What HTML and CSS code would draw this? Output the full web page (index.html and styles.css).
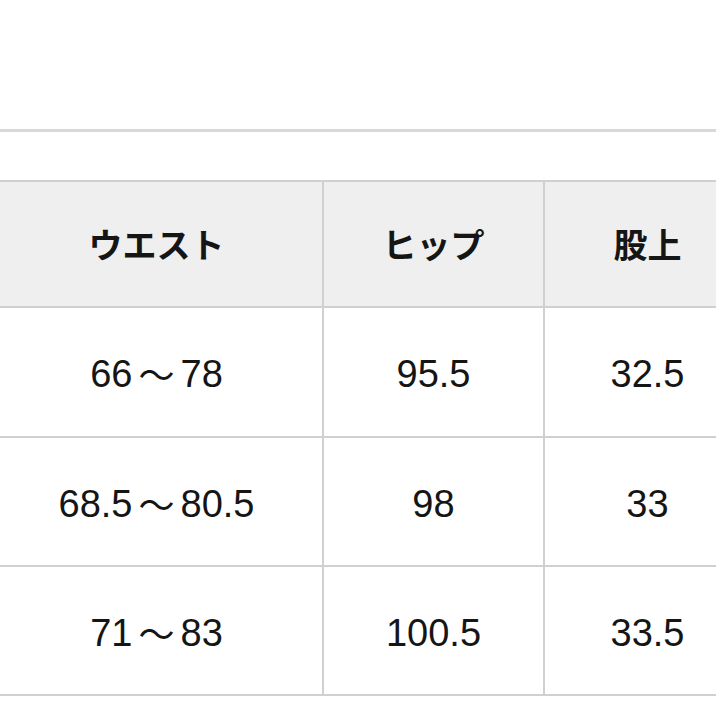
FILE: index.html
```html
<!DOCTYPE html>
<html lang="ja">
<head>
<meta charset="utf-8">
<link rel="stylesheet" href="styles.css">
</head>
<body>
<div class="page">
  <div class="rule"></div>
  <div class="size-table">
    <div class="cell head">ウエスト</div>
    <div class="cell head">ヒップ</div>
    <div class="cell head">股上</div>
    <div class="cell r1">66<span class="tilde">～</span>78</div>
    <div class="cell r1">95.5</div>
    <div class="cell r1">32.5</div>
    <div class="cell r2">68.5<span class="tilde">～</span>80.5</div>
    <div class="cell r2">98</div>
    <div class="cell r2">33</div>
    <div class="cell r2">71<span class="tilde">～</span>83</div>
    <div class="cell r2">100.5</div>
    <div class="cell r2">33.5</div>
  </div>
</div>
</body>
</html>
```

FILE: styles.css
```css
html, body {
  margin: 0;
  padding: 0;
  background: #ffffff;
}
.page {
  width: 716px;
  height: 716px;
  overflow: hidden;
  padding-top: 129px;
  box-sizing: border-box;
  font-family: "Liberation Sans", "Noto Sans CJK JP", sans-serif;
  color: #151515;
}
.rule {
  height: 3px;
  background: #d9d9d9;
}
.size-table {
  margin-top: 48px;
  margin-left: -9px;
  width: 761px;
  display: grid;
  grid-template-columns: 333px 221px 207px;
  border-top: 2px solid #d0d0d0;
}
.cell {
  box-sizing: border-box;
  border-right: 2px solid #d0d0d0;
  border-bottom: 2px solid #d0d0d0;
  display: flex;
  align-items: center;
  justify-content: center;
  font-size: 38px;
  line-height: 1;
  padding-top: 4px;
}
.tilde {
  font-family: "Noto Sans CJK JP", sans-serif;
  font-size: 36px;
  line-height: 1;
  margin: 0 6px;
  padding-bottom: 2px;
}
.head {
  height: 126px;
  background: #efefef;
  font-family: "Noto Sans CJK JP", sans-serif;
  font-weight: 700;
  font-size: 34px;
  padding-top: 0;
}
.r1 {
  height: 130px;
}
.r2 {
  height: 129px;
}
```
